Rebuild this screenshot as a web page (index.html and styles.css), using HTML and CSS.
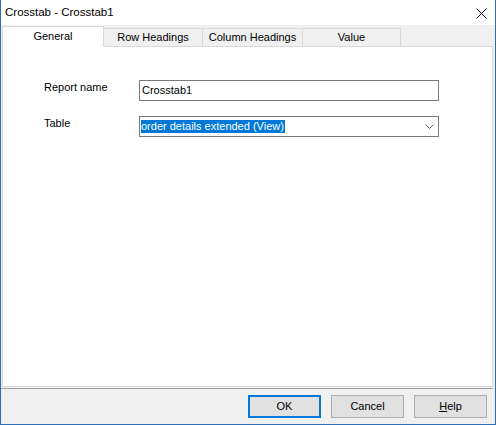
FILE: index.html
```html
<!DOCTYPE html>
<html>
<head>
<meta charset="utf-8">
<link rel="stylesheet" href="styles.css">
</head>
<body>
<div class="window">
  <div class="titlebar">
    <span class="title">Crosstab - Crosstab1</span>
    <svg class="close" width="11" height="11" viewBox="0 0 11 11"><path d="M0.5 0.5 L10.5 10.5 M10.5 0.5 L0.5 10.5" stroke="#000" stroke-width="1" fill="none"/></svg>
  </div>
  <div class="client">
    <div class="tabs">
      <div class="tab selected">General</div>
      <div class="tab w99">Row Headings</div>
      <div class="tab w100">Column Headings</div>
      <div class="tab w98">Value</div>
    </div>
    <div class="panel">
      <div class="form">
        <div class="label">Report name</div>
        <div class="field"><span class="value">Crosstab1</span></div>
        <div class="label">Table</div>
        <div class="field combo"><span class="sel">order details extended (View)</span>
          <svg class="chev" width="9" height="5" viewBox="0 0 9 5"><path d="M0.5 0.5 L4.5 4.5 L8.5 0.5" stroke="#606060" stroke-width="1" fill="none"/></svg>
        </div>
      </div>
    </div>
    <div class="sep"></div>
    <div class="footer">
      <div class="btn default">OK</div>
      <div class="btn">Cancel</div>
      <div class="btn"><u>H</u>elp</div>
    </div>
  </div>
</div>
</body>
</html>
```

FILE: styles.css
```css
* { box-sizing: border-box; }
html, body { margin: 0; padding: 0; background: #fff; }
body { font-family: "Liberation Sans", Arial, sans-serif; font-size: 11px; color: #000; }
.window {
  width: 496px; height: 425px;
  border: 1px solid #2f6db3; border-top: none;
  display: flex; flex-direction: column;
  background: #f0f0f0;
}
.titlebar {
  height: 25px; background: #fff;
  display: flex; align-items: center; justify-content: space-between;
  padding: 0 8px 0 4px;
}
.title { font-size: 11.5px; line-height: 13px; margin-top: 0px; }
.close { display: block; margin-top: 1px; }
.client { flex: 1; display: flex; flex-direction: column; padding: 0 2px 0 1px; }
.tabs { height: 21px; display: flex; align-items: flex-end; }
.tab {
  height: 18px; background: #f0f0f0;
  border-top: 1px solid #d9d9d9; border-right: 1px solid #d9d9d9;
  text-align: center; line-height: 13px; padding-top: 2px;
}
.tab.selected {
  width: 102px; height: 21px; background: #fff;
  border-left: 1px solid #d9d9d9;
  margin-bottom: -1px; position: relative; z-index: 1;
  padding-top: 3px;
}
.w99 { width: 99px; }
.w100 { width: 100px; }
.w98 { width: 98px; }
.panel { height: 341px; background: #fff; border: 1px solid #d9d9d9; }
.form {
  display: grid; grid-template-columns: 95px 300px;
  row-gap: 15px; margin: 33px 0 0 41px;
}
.label { line-height: 13px; padding-top: 1px; }
.field {
  height: 21px; border: 1px solid #7a7a7a; background: #fff;
  display: flex; align-items: center; justify-content: space-between;
  padding: 0 4px 0 2px;
}
.value { line-height: 13px; }
.combo { padding-left: 1px; }
.sel { background: #0078d7; color: #fff; line-height: 13px; padding: 0 1px 0 0; }
.chev { display: block; }
.sep { height: 1px; background: #a0a0a0; margin-top: 1px; margin-left: -1px; }
.footer {
  flex: 1; display: flex; justify-content: flex-end; align-items: flex-start;
  gap: 10px; padding: 6px 6px 0 0;
}
.btn {
  width: 73px; height: 23px; background: #e1e1e1; border: 1px solid #adadad;
  display: flex; align-items: center; justify-content: center; line-height: 13px;
}
.btn.default { border: 2px solid #0078d7; }
```
